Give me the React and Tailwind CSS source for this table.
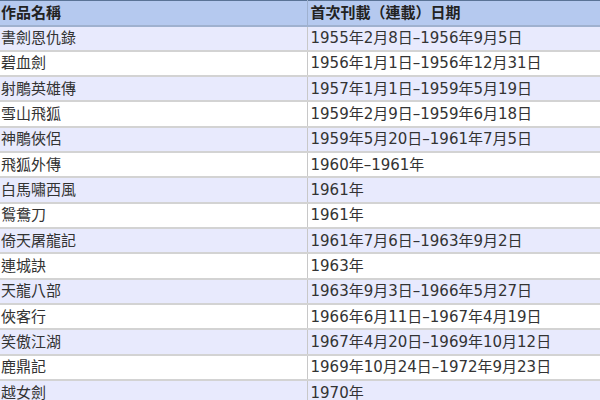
const works = [
  ['書劍恩仇錄', '1955年2月8日–1956年9月5日'],
  ['碧血劍', '1956年1月1日–1956年12月31日'],
  ['射鵰英雄傳', '1957年1月1日–1959年5月19日'],
  ['雪山飛狐', '1959年2月9日–1959年6月18日'],
  ['神鵰俠侶', '1959年5月20日–1961年7月5日'],
  ['飛狐外傳', '1960年–1961年'],
  ['白馬嘯西風', '1961年'],
  ['鴛鴦刀', '1961年'],
  ['倚天屠龍記', '1961年7月6日–1963年9月2日'],
  ['連城訣', '1963年'],
  ['天龍八部', '1963年9月3日–1966年5月27日'],
  ['俠客行', '1966年6月11日–1967年4月19日'],
  ['笑傲江湖', '1967年4月20日–1969年10月12日'],
  ['鹿鼎記', '1969年10月24日–1972年9月23日'],
  ['越女劍', '1970年'],
];

export default function App() {
  return (
    <div className="w-[600px] h-[400px] overflow-hidden bg-white font-['DejaVu_Sans','Noto_Sans_CJK_TC',sans-serif] text-[15px] text-[#333]">
      <table className="w-full border-collapse">
        <thead>
          <tr className="h-[25px] bg-[#b5c9ef] border-t border-t-[#5a7396] border-b-2 border-b-[#9fb1cf]">
            <th className="w-[307px] p-0 pl-px text-left font-bold text-[#222] border-r border-r-[#9fb1cf]">作品名稱</th>
            <th className="p-0 pl-[3px] text-left font-bold text-[#222]">首次刊載（連載）日期</th>
          </tr>
        </thead>
        <tbody>
          {works.map(([title, date], i) => (
            <tr
              key={title}
              className={i % 2 === 0 ? 'h-[25.33px] bg-[#e8eafd] border-b-2 border-b-[#d3d3d3]' : 'h-[25.33px] bg-white border-b-2 border-b-[#d3d3d3]'}
            >
              <td className="p-0 pl-px whitespace-nowrap border-r border-r-[#c8c8c8]">{title}</td>
              <td className="p-0 pl-[3px] whitespace-nowrap">{date}</td>
            </tr>
          ))}
        </tbody>
      </table>
    </div>
  );
}
